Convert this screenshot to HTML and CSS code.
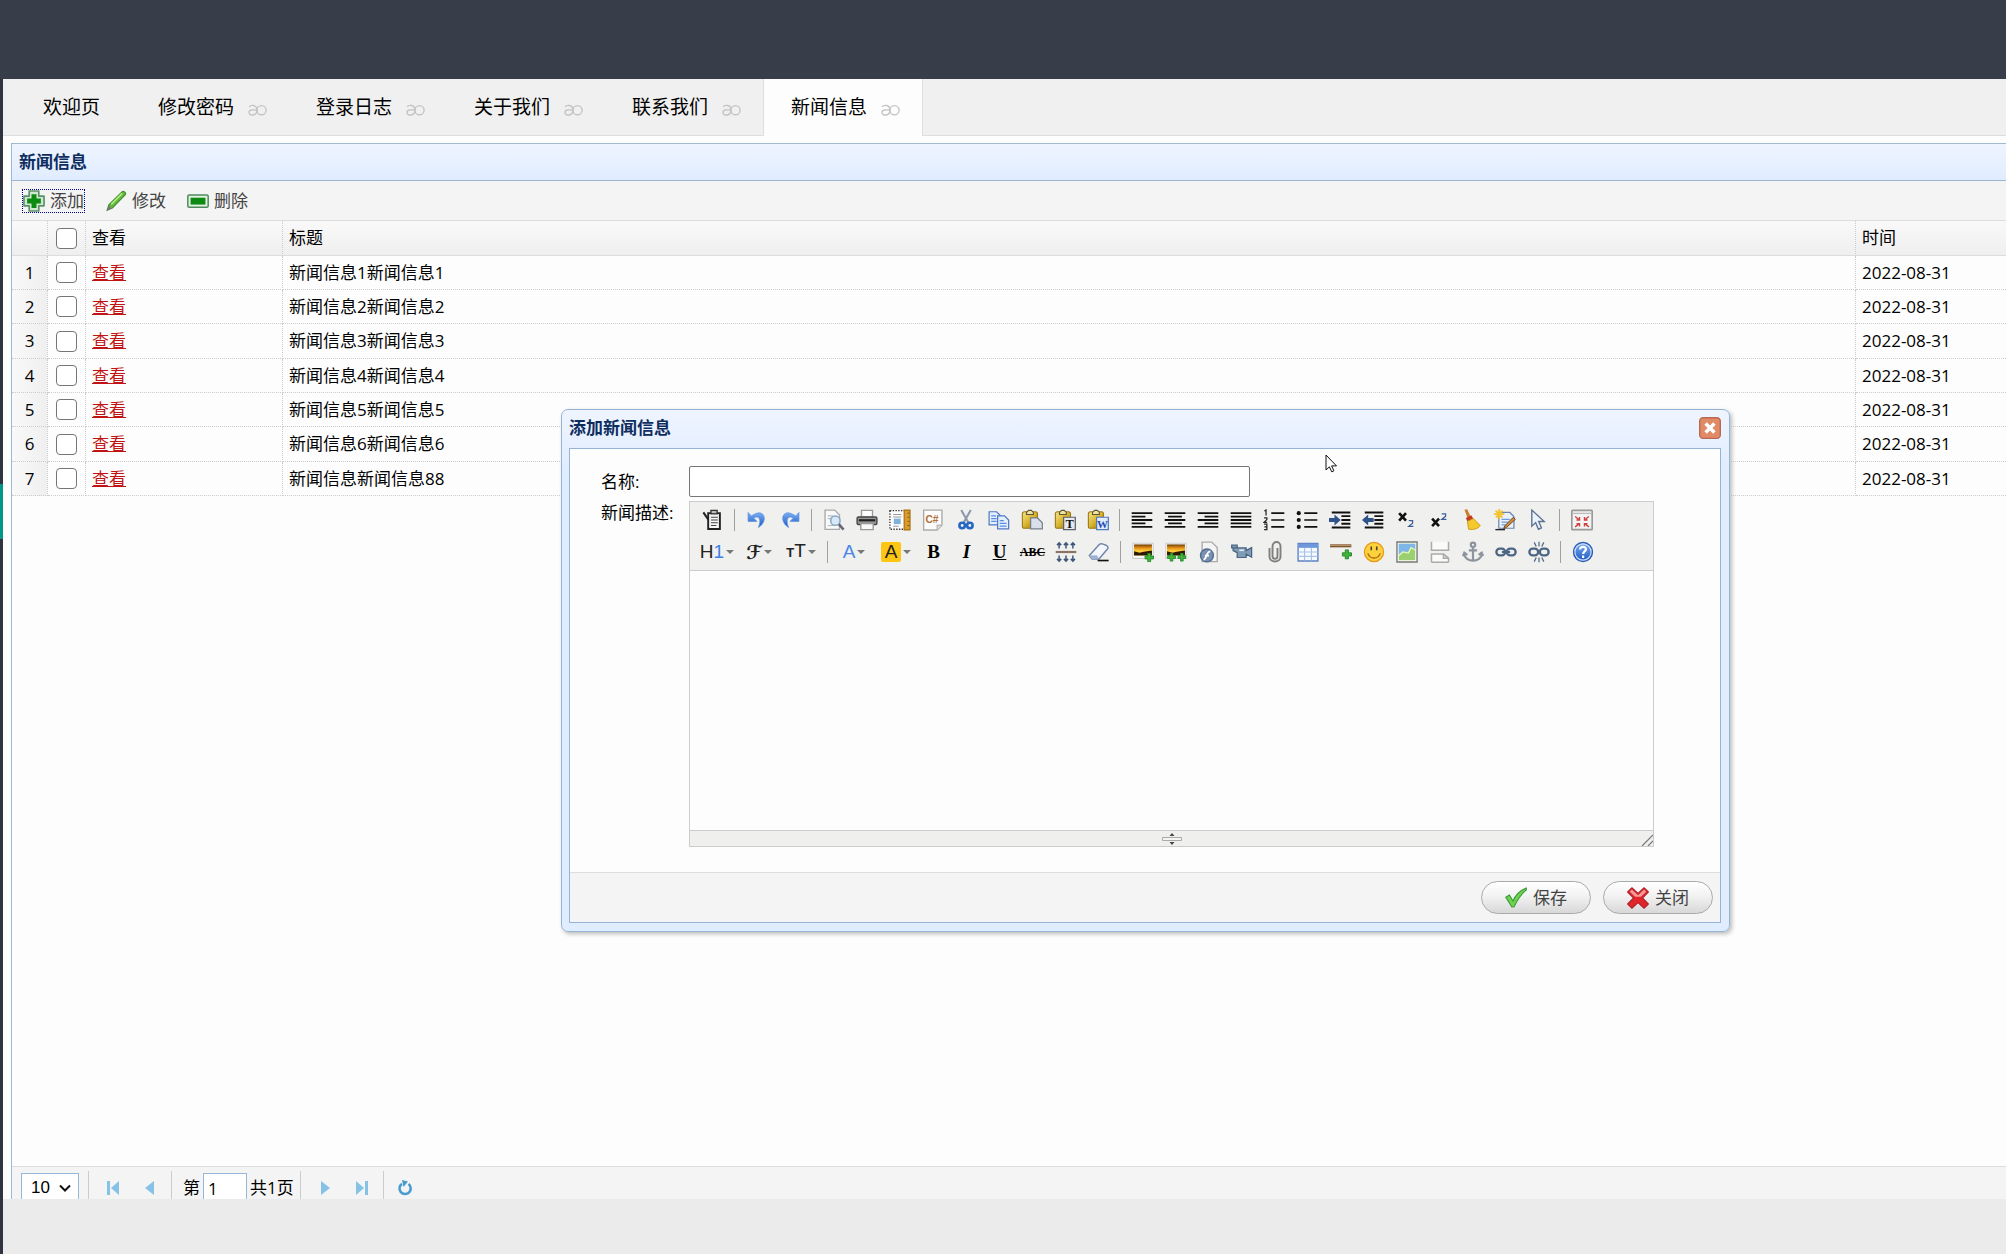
FILE: index.html
```html
<!DOCTYPE html>
<html lang="zh-CN">
<head>
<meta charset="utf-8">
<title>新闻信息</title>
<link rel="stylesheet" href="styles.css">
</head>
<body>
<svg class="defs" aria-hidden="true">
  <defs>
    <symbol id="closer" viewBox="0 0 19 12"><path d="M1.200 3C2.500.6 8.900.4 9 6C9 12.400 1 12.200 1 8.400C1 5.600 4.500 5.700 9 6" fill="none" stroke="currentColor" stroke-width="1.400"/><circle cx="13.500" cy="6.200" r="4.600" fill="none" stroke="currentColor" stroke-width="1.400"/></symbol>
    <symbol id="clipboard" viewBox="0 0 16 16"><path d="M4.500 3h8.500v11.500h-8.500z" fill="#f6f6f6" stroke="#222" stroke-width="1.400"/><path d="M6.500 1h4.500v2.500h-4.500z" fill="#bbb" stroke="#333"/><path d="M6.500 6h5M6.500 8h5M6.500 10h5M6.500 12h4" stroke="#444" stroke-width=".8"/><path d="M1 2.500l3.500 5" stroke="#222" stroke-width="1.500"/></symbol>
    <linearGradient id="gBoard" x2="1" y2="1"><stop offset="0" stop-color="#f7e48a"/><stop offset=".5" stop-color="#d9b52e"/><stop offset="1" stop-color="#8f6d10"/></linearGradient>
    <symbol id="board" viewBox="0 0 16 16"><rect x="1" y="2" width="11" height="12" rx="1.500" fill="url(#gBoard)" stroke="#9a7a1c" stroke-width=".8"/><path d="M4 4V2.500L5.500 1h2L9 2.500V4z" fill="#eee4a0" stroke="#5c5636" stroke-width=".8"/></symbol>
    <linearGradient id="gPic" x2="0" y2="1"><stop offset="0" stop-color="#6b3d08"/><stop offset=".3" stop-color="#e08c12"/><stop offset=".6" stop-color="#ffcf3a"/></linearGradient>
    <symbol id="photo" viewBox="0 0 16 16"><path d="M.6 1.600h14.800v11H.6z" fill="#fff" stroke="#ccc" stroke-width=".8"/><path d="M1.500 2.500h13v8h-13z" fill="url(#gPic)"/><path d="M1.500 7.500l4 1 3-.6 6-1v3.600h-13z" fill="#2c1a05"/></symbol>
    <symbol id="plus" viewBox="0 0 6 6"><path d="M2.100.3h1.800v1.800h1.800v1.800H3.900v1.800H2.100V3.900H.3V2.100h1.800z" fill="#3fb53a" stroke="#1d7f22" stroke-width=".5"/></symbol>
    <symbol id="chain" viewBox="0 0 16 16"><g fill="none" stroke="#4c6785" stroke-width="1.700"><rect x="1" y="5.500" width="6.400" height="5" rx="2.500"/><rect x="8.600" y="5.500" width="6.400" height="5" rx="2.500"/></g></symbol>
    <linearGradient id="gBlue" x2="0" y2="1"><stop offset="0" stop-color="#7bb0f5"/><stop offset="1" stop-color="#1d56c0"/></linearGradient>
    <symbol id="turn" viewBox="0 0 16 16"><path d="M1.500 2.500v6.500h6.500l-2.300-2.300c3-2.400 6 .2 3.300 6.800c6.500-4 5.200-12-1-10.500c-1.700.4-3 1.300-4.100 2z" fill="url(#gBlue)" stroke="#5a8fe0" stroke-width=".5"/></symbol>
  </defs>
</svg>

<header class="topbar"></header>
<div class="shell">
  <aside class="rail"><div class="rail-active"></div></aside>
  <main class="main">
    <nav class="tabs">
      <a class="tab tab-home" href="#">欢迎页</a>
      <a class="tab" href="#">修改密码<svg class="closer"><use href="#closer"/></svg></a>
      <a class="tab" href="#">登录日志<svg class="closer"><use href="#closer"/></svg></a>
      <a class="tab" href="#">关于我们<svg class="closer"><use href="#closer"/></svg></a>
      <a class="tab" href="#">联系我们<svg class="closer"><use href="#closer"/></svg></a>
      <a class="tab tab-active" href="#">新闻信息<svg class="closer"><use href="#closer"/></svg></a>
    </nav>

    <section class="workspace">
      <div class="panel">
        <h2 class="panel-title">新闻信息</h2>
        <div class="toolbar">
          <button class="tool tool-focus" type="button"><svg viewBox="0 0 16 16"><path d="M4.500.7h7v3.800h3.800v7h-3.800v3.800h-7v-3.800H.7v-7h3.800z" fill="#cfe8cf" stroke="#5d8f6a" stroke-width="1.200" stroke-linejoin="round"/><path d="M6.200 3h3.600v3.200H13v3.600H9.800V13H6.200V9.800H3V6.200h3.200z" fill="#0c8a12"/></svg>添加</button>
          <button class="tool" type="button"><svg viewBox="0 0 16 16"><path d="M1.500 14.800l1.300-4L12.500 1.200c1-.9 3.200 1 2.300 2.200L5.300 13.200z" fill="#62b83c" stroke="#3c8f2a" stroke-width=".8"/><path d="M4.500 10.500l8-8" stroke="#b6ea84" stroke-width="1.200"/><path d="M1.300 15l1.300-3.800 2.300 2.200z" fill="#777"/></svg>修改</button>
          <button class="tool" type="button"><svg viewBox="0 0 16 16"><rect x=".6" y="3.600" width="14.800" height="9" rx="1" fill="#e3f2e3" stroke="#4e8a5d" stroke-width="1.100"/><rect x="2.600" y="5.600" width="10.800" height="5" fill="#0c8a12"/></svg>删除</button>
        </div>
        <table class="grid">
          <colgroup><col class="c-num"><col class="c-check"><col class="c-view"><col><col class="c-time"></colgroup>
          <thead><tr><th></th><th class="check"><input type="checkbox" aria-label="全选"></th><th>查看</th><th>标题</th><th>时间</th></tr></thead>
          <tbody>
            <tr><td class="num">1</td><td class="check"><input type="checkbox" aria-label="1"></td><td><a href="#">查看</a></td><td>新闻信息1新闻信息1</td><td>2022-08-31</td></tr>
            <tr><td class="num">2</td><td class="check"><input type="checkbox" aria-label="2"></td><td><a href="#">查看</a></td><td>新闻信息2新闻信息2</td><td>2022-08-31</td></tr>
            <tr><td class="num">3</td><td class="check"><input type="checkbox" aria-label="3"></td><td><a href="#">查看</a></td><td>新闻信息3新闻信息3</td><td>2022-08-31</td></tr>
            <tr><td class="num">4</td><td class="check"><input type="checkbox" aria-label="4"></td><td><a href="#">查看</a></td><td>新闻信息4新闻信息4</td><td>2022-08-31</td></tr>
            <tr><td class="num">5</td><td class="check"><input type="checkbox" aria-label="5"></td><td><a href="#">查看</a></td><td>新闻信息5新闻信息5</td><td>2022-08-31</td></tr>
            <tr><td class="num">6</td><td class="check"><input type="checkbox" aria-label="6"></td><td><a href="#">查看</a></td><td>新闻信息6新闻信息6</td><td>2022-08-31</td></tr>
            <tr><td class="num">7</td><td class="check"><input type="checkbox" aria-label="7"></td><td><a href="#">查看</a></td><td>新闻信息新闻信息88</td><td>2022-08-31</td></tr>
          </tbody>
        </table>
        <div class="pager">
          <div class="pager-row">
            <span class="size"><select aria-label="每页条数"><option>10</option></select><svg viewBox="0 0 12 8"><path d="M1 1.500l5 5 5-5" fill="none" stroke="#111" stroke-width="2"/></svg></span>
            <i class="bar"></i>
            <button class="page" type="button" aria-label="首页"><svg viewBox="0 0 14 14"><path d="M1 0h3v14H1zM13 0v14L5 7z" fill="currentColor"/></svg></button>
            <button class="page" type="button" aria-label="上一页"><svg viewBox="0 0 14 14"><path d="M11 0v14L2 7z" fill="currentColor"/></svg></button>
            <i class="bar"></i>
            <label class="pageno">第<input type="text" value="1">共1页</label>
            <i class="bar"></i>
            <button class="page" type="button" aria-label="下一页"><svg viewBox="0 0 14 14"><path d="M3 0v14l9-7z" fill="currentColor"/></svg></button>
            <button class="page" type="button" aria-label="末页"><svg viewBox="0 0 14 14"><path d="M10 0h3v14h-3zM1 0v14l8-7z" fill="currentColor"/></svg></button>
            <i class="bar"></i>
            <button class="page page-refresh" type="button" aria-label="刷新"><svg viewBox="0 0 16 16"><path d="M5 3.800a5.600 5.600 0 1 0 6.500.2" fill="none" stroke="currentColor" stroke-width="2.600"/><path d="M5 0l6 1.500L6.500 7z" fill="currentColor"/></svg></button>
          </div>
        </div>
      </div>
    </section>
    <footer class="foot"></footer>
  </main>
</div>

<form class="dialog" role="dialog" aria-labelledby="dlg-title">
  <div class="dialog-head">
    <h2 id="dlg-title">添加新闻信息</h2>
    <button class="dialog-x" type="button" aria-label="关闭窗口"><svg viewBox="0 0 16 16"><rect x=".5" y=".5" width="15" height="15" rx="2.500" fill="#e08a66" stroke="#b86a50"/><path d="M4.800 4.800l6.400 6.400M11.200 4.800l-6.400 6.400" stroke="#fff" stroke-width="2.600"/></svg></button>
  </div>
  <div class="dialog-body">
    <div class="fields">
      <label for="name">名称:</label>
      <input class="name" id="name" type="text">
      <label for="desc">新闻描述:</label>
      <div class="editor">
        <div class="ed-tools">
          <div class="ed-row">
            <button type="button" aria-label="模板"><svg viewBox="0 0 16 16"><use href="#clipboard"/></svg></button>
            <i class="ed-sep"></i>
            <button type="button" aria-label="后退"><svg viewBox="0 0 16 16"><use href="#turn"/></svg></button>
            <button type="button" aria-label="前进"><svg viewBox="0 0 16 16"><g transform="matrix(-1 0 0 1 16 0)"><use href="#turn"/></g></svg></button>
            <i class="ed-sep"></i>
            <button type="button" aria-label="预览"><svg viewBox="0 0 16 16"><path d="M1.500.8h7l3.500 3.500v10.500H1.500z" fill="#f7f9fb" stroke="#aaa"/><path d="M3.500 5h4M3.500 7h3M3.500 12h5" stroke="#bbb" stroke-width=".8"/><circle cx="9" cy="8.500" r="3.400" fill="#d5e9fb" stroke="#8aa6c2" stroke-width="1.100"/><path d="M11.500 11l3.500 4" stroke="#667" stroke-width="1.800"/></svg></button>
            <button type="button" aria-label="打印"><svg viewBox="0 0 16 16"><path d="M4 1h8v5H4z" fill="#fff" stroke="#999"/><rect x=".8" y="5.800" width="14.400" height="5.500" rx="1" fill="#999" stroke="#444"/><path d="M2 8.200h12" stroke="#222" stroke-width="1.600"/><path d="M3.500 10.500h9v4.500h-9z" fill="#fafafa" stroke="#999"/></svg></button>
            <button type="button" aria-label="编辑页面"><svg viewBox="0 0 16 16"><path d="M.7 1.200h11v13.500H.7z" fill="#fdfdfd" stroke="#333" stroke-dasharray="1 1"/><path d="M3 4h6M3 5.800h6M3 12.500h4" stroke="#999" stroke-width=".8"/><path d="M3.500 7h5v4h-5z" fill="#7fb2da"/><path d="M11 .8h4.300v14.400H11z" fill="#d99b2b" stroke="#a76e10" stroke-width=".8"/><path d="M13.500 3h1.500M13.500 6h1.500M13.500 9h1.500M13.500 12h1.500" stroke="#7a4d00" stroke-width=".6"/></svg></button>
            <button type="button" aria-label="插入代码"><svg viewBox="0 0 16 16"><path d="M1.200.8h13.300v11l-3.500 3.500H1.200z" fill="#fdfdfd" stroke="#aaa"/><path d="M14.500 11.800H11v3.500" fill="#ddd" stroke="#bbb"/><text x="2.500" y="10.300" font-family="Liberation Sans" font-size="7.500" font-weight="700" fill="#b0703a">C#</text></svg></button>
            <button type="button" aria-label="剪切"><svg viewBox="0 0 16 16"><path d="M4.500.8L9.800 10M11.500.8L6.200 10" stroke="#8b98ab" stroke-width="1.500"/><g fill="none" stroke="#2767c4" stroke-width="1.900"><circle cx="5.200" cy="12" r="2"/><circle cx="10.800" cy="12" r="2"/></g></svg></button>
            <button type="button" aria-label="复制"><svg viewBox="0 0 16 16"><g fill="#e4effd" stroke="#5179c4" stroke-width=".9"><path d="M.8 2h5.400l2.600 2.600v7H.8z"/><path d="M7 5h5l3 3v6.500H7z"/></g><path d="M2.300 5h3.500M2.300 7h4M2.300 9h4M8.500 8.500h3M8.500 10.500h5M8.500 12.500h5" stroke="#5a8fe0" stroke-width=".9"/></svg></button>
            <button type="button" aria-label="粘贴"><svg viewBox="0 0 16 16"><use href="#board"/><path d="M7 6.500h5l3.500 3.500v4.500H7z" fill="#d9e0ea" stroke="#77808c" stroke-width=".9"/></svg></button>
            <button type="button" aria-label="粘贴为无格式文本"><svg viewBox="0 0 16 16"><use href="#board"/><path d="M7 6h8.500v9H7z" fill="#e6e9ee" stroke="#5b626c" stroke-width=".9"/><text x="8.300" y="13.700" font-family="Liberation Serif" font-size="9" font-weight="700" fill="#111">T</text></svg></button>
            <button type="button" aria-label="从 Word 粘贴"><svg viewBox="0 0 16 16"><use href="#board"/><path d="M7 6h8.500v9H7z" fill="#e2ecfa" stroke="#5179c4" stroke-width=".9"/><text x="7.200" y="13.500" font-family="Liberation Serif" font-size="8" font-weight="700" fill="#1d4fae">W</text></svg></button>
            <i class="ed-sep"></i>
            <button type="button" aria-label="左对齐"><svg viewBox="0 0 16 16"><path d="M.5 3h15M.5 5.500h10M.5 8h15M.5 10.500h10M.5 13h15" stroke="#111" stroke-width="1.300"/></svg></button>
            <button type="button" aria-label="居中"><svg viewBox="0 0 16 16"><path d="M.5 3h15M3 5.500h10M.5 8h15M3 10.500h10M.5 13h15" stroke="#111" stroke-width="1.300"/></svg></button>
            <button type="button" aria-label="右对齐"><svg viewBox="0 0 16 16"><path d="M.5 3h15M5.500 5.500h10M.5 8h15M5.500 10.500h10M.5 13h15" stroke="#111" stroke-width="1.300"/></svg></button>
            <button type="button" aria-label="两端对齐"><svg viewBox="0 0 16 16"><path d="M.5 3h15M.5 5.500h15M.5 8h15M.5 10.500h15M.5 13h15" stroke="#111" stroke-width="1.300"/></svg></button>
            <button type="button" aria-label="编号"><svg viewBox="0 0 16 16"><path d="M6 3h9.500M6 8h9.500M6 13h9.500" stroke="#111" stroke-width="1.200"/><path d="M1 1.500l1.200-.7v4M.8 6.500h2v1.200l-2 2h2.200M.8 11h2v4h-2M1 13h1.800" fill="none" stroke="#222" stroke-width=".9"/></svg></button>
            <button type="button" aria-label="项目符号"><svg viewBox="0 0 16 16"><path d="M6 3h9.500M6 8h9.500M6 13h9.500" stroke="#111" stroke-width="1.200"/><g fill="#111"><circle cx="2" cy="3" r="1.500"/><circle cx="2" cy="8" r="1.500"/><circle cx="2" cy="13" r="1.500"/></g></svg></button>
            <button type="button" aria-label="增加缩进"><svg viewBox="0 0 16 16"><path d="M2 2.500h13.500M9 5.200h6.500M9 8h6.500M9 10.700h6.500M2 13.500h13.500" stroke="#111" stroke-width="1.400"/><path d="M0 6.500h4V4l4.500 4L4 12V9.500H0z" fill="#2f5288"/></svg></button>
            <button type="button" aria-label="减少缩进"><svg viewBox="0 0 16 16"><path d="M2 2.500h13.500M9 5.200h6.500M9 8h6.500M9 10.700h6.500M2 13.500h13.500" stroke="#111" stroke-width="1.400"/><path d="M8.500 6.500h-4V4L0 8l4.500 4V9.500h4z" fill="#2f5288"/></svg></button>
            <button type="button" aria-label="下标"><svg viewBox="0 0 16 16"><path d="M3 3l5 5.500M8 3L3 8.500" stroke="#111" stroke-width="1.900"/><path d="M10 8.500h2.800v1.800L10 12.600h3.400" fill="none" stroke="#3d5f96" stroke-width=".9"/></svg></button>
            <button type="button" aria-label="上标"><svg viewBox="0 0 16 16"><path d="M3 7l5 5.500M8 7l-5 5.500" stroke="#111" stroke-width="1.900"/><path d="M10 3.500h2.800v1.800L10 7.600h3.400" fill="none" stroke="#3d5f96" stroke-width=".9"/></svg></button>
            <button type="button" aria-label="一键排版"><svg viewBox="0 0 16 16"><path d="M2.500.5l2-.3L7 5.500 4.800 6.500z" fill="#c9802c"/><path d="M3.500 6.500l4-2 1.500 2.500-4.300 2z" fill="#c43b22"/><path d="M4.700 9L9 7l5 5c-1.500 2.500-5 3.200-8.500 2.700z" fill="#f4c92e" stroke="#cf9a12" stroke-width=".7"/></svg></button>
            <button type="button" aria-label="清理代码"><svg viewBox="0 0 16 16"><path d="M3.500 2.500h8l3 3v8.500H3.500z" fill="#eaf1fb" stroke="#6d86a8" stroke-width=".9"/><path d="M5.500 7.500h6M5.500 9.500h5M5.500 11.500h5" stroke="#6d9be0" stroke-width=".9"/><path d="M3.800 0v7.500M0 3.800h7.500M1.200 1.200l5 5M6.300 1.200l-5 5" stroke="#f2c230" stroke-width="1.300"/><path d="M15.500 7.500l-6.500 6-2 .8.800-2L14 6z" fill="#d58b3e" stroke="#6b4518" stroke-width=".7"/><path d="M1 15h7" stroke="#223"/></svg></button>
            <button type="button" aria-label="全选内容"><svg viewBox="0 0 16 16"><path d="M3.500.8v11.700l2.800-2.600 2 4.800 2.200-1-2-4.600h4z" fill="#edf3fc" stroke="#5b7294"/></svg></button>
            <i class="ed-sep"></i>
            <button type="button" aria-label="全屏"><svg viewBox="0 0 16 16"><rect x=".6" y="1" width="14.800" height="14" rx=".5" fill="#f4f4f4" stroke="#999" stroke-width="1.200"/><path d="M1 3.200h14" stroke="#bbb"/><path d="M3 5.500l2.500 2M13 5.500l-2.500 2M3 13l2.500-2M13 13l-2.500-2M6.200 5.800V8H4M9.800 5.800V8H12M6.200 12.800v-2.200H4M9.800 12.800v-2.200H12" stroke="#cf4040" fill="none"/></svg></button>
          </div>
          <div class="ed-row">
            <button class="drop" type="button"><span>H<b>1</b></span><i class="caret"></i></button>
            <button class="drop" type="button"><span class="script">ℱ</span><i class="caret"></i></button>
            <button class="drop" type="button"><span><small>T</small>T</span><i class="caret"></i></button>
            <i class="ed-sep"></i>
            <button class="drop" type="button"><span class="fore">A</span><i class="caret"></i></button>
            <button class="drop" type="button"><span class="hilite">A</span><i class="caret"></i></button>
            <button class="glyph" type="button"><b>B</b></button>
            <button class="glyph" type="button"><em>I</em></button>
            <button class="glyph" type="button"><u>U</u></button>
            <button class="glyph strike" type="button"><s>ABC</s></button>
            <button type="button" aria-label="行距"><svg viewBox="0 0 16 16"><path d="M.5 8h15" stroke="#8a7464" stroke-width="1.600"/><path d="M3 1v4.500M8 1v4.500M13 1v4.500M3 10.500V15M8 10.500V15M13 10.500V15M1.500 3L3 1.300 4.500 3M6.500 3L8 1.300 9.500 3M11.500 3L13 1.300 14.500 3M1.500 13L3 14.700 4.500 13M6.500 13L8 14.700 9.500 13M11.500 13l1.500 1.700 1.500-1.700" fill="none" stroke="#3f5677" stroke-width="1.100"/></svg></button>
            <button type="button" aria-label="删除格式"><svg viewBox="0 0 16 16"><path d="M1 10.500l7-7.700c.8-.9 2-.9 3-.5l2.500 1c1.300.8 1.300 1.700.5 2.700L8 13H3z" fill="#f3f6fb" stroke="#7188ab" stroke-width="1.100"/><path d="M1 10.500l5.500-.2L8 13H3z" fill="#9eb3d2"/><path d="M7 14.200h8" stroke="#111" stroke-width="1.200"/></svg></button>
            <i class="ed-sep"></i>
            <button type="button" aria-label="图片"><svg viewBox="0 0 16 16"><use href="#photo"/><use href="#plus" x="9" y="8.500" width="7" height="7"/></svg></button>
            <button type="button" aria-label="批量图片上传"><svg viewBox="0 0 16 16"><use href="#photo"/><use href="#plus" x="1.500" y="8.500" width="6.500" height="6.500"/><use href="#plus" x="9" y="8.500" width="6.500" height="6.500"/></svg></button>
            <button type="button" aria-label="Flash"><svg viewBox="0 0 16 16"><path d="M3 .8h7l4 4V15H3z" fill="#f4f4f4" stroke="#aaa"/><circle cx="6.500" cy="10.500" r="4.700" fill="#7992b2" stroke="#4e6b8f"/><path d="M9 7.500c-3-.2-2.500 6-5 6M5 10.700h3" fill="none" stroke="#fff" stroke-width="1.300"/></svg></button>
            <button type="button" aria-label="视音频"><svg viewBox="0 0 16 16"><path d="M.5 3h4v2h-4zM1.500 5h9.500v2l4-2.200v7L11 9.500V12H4.500V8.500L1.500 7z" fill="#7f9bb5" stroke="#486480" stroke-width=".9"/><path d="M6 6.700h3.500" stroke="#dbe8f4" stroke-width="1.300"/></svg></button>
            <button type="button" aria-label="插入文件"><svg viewBox="0 0 16 16"><path d="M4 5v6.500c0 4.500 8 4.500 8 0V4c0-4.300-5.800-4.300-5.800 0v7c0 2.500 3.600 2.500 3.600 0V5" fill="none" stroke="#808080" stroke-width="1.400"/></svg></button>
            <button type="button" aria-label="表格"><svg viewBox="0 0 16 16"><path d="M.8 1.800h14.400v12.700H.8z" fill="#f7fbff" stroke="#5c82c4"/><path d="M1 2h14v3H1z" fill="#6f98dc"/><path d="M1 8h14M1 11.200h14M5.500 5v9M10.500 5v9" stroke="#a9c2e8" stroke-width=".9"/></svg></button>
            <button type="button" aria-label="插入横线"><svg viewBox="0 0 16 16"><path d="M0 3.500h15.500" stroke="#7c5631" stroke-width="2.200"/><path d="M0 3.200h15.500" stroke="#c79c6e" stroke-width=".7"/><use href="#plus" x="8.500" y="6" width="7.500" height="7.500"/></svg></button>
            <button type="button" aria-label="插入表情"><svg viewBox="0 0 16 16"><circle cx="8" cy="8" r="7" fill="#fdd23c" stroke="#e79a1a" stroke-width=".9"/><path d="M3.500 9c1.500 4.500 7.500 4.500 9 0" fill="none" stroke="#a96a10"/><path d="M6 4v2.800M10 4v2.800" stroke="#543" stroke-width="1.200"/></svg></button>
            <button type="button" aria-label="地图"><svg viewBox="0 0 16 16"><path d="M.7.700h14.600v14.600H.7z" fill="#fff" stroke="#777"/><path d="M2 2h12v12H2z" fill="#9bd070"/><path d="M2 2h12v4L10.500 4.500 8.500 8 5 7.500 2 10z" fill="#7fb6ea"/><path d="M2 10.500l3-2.500 4 .8 2-4L14 6.500" fill="none" stroke="#e9f5c0" stroke-width=".9"/></svg></button>
            <button type="button" aria-label="插入分页符"><svg viewBox="0 0 16 16"><path d="M1.800.5v6.200h12.400V.5M1.800 15.500V9.500h8.700l3.700 3v3M10.500 9.500v3h3.700M1.800 15.400h12.400" fill="#fafafa" stroke="#aaa" stroke-width="1.100"/></svg></button>
            <button type="button" aria-label="锚点"><svg viewBox="0 0 16 16"><g fill="none" stroke="#8c949d" stroke-width="1.600"><circle cx="8" cy="2.800" r="1.600"/><path d="M8 4.500v10M5 6.800h6M1.500 9c.5 7 12.500 7 13 0M.7 11l1-2.500 2.200 1.600M15.300 11l-1-2.500-2.200 1.600"/></g></svg></button>
            <button type="button" aria-label="超级链接"><svg viewBox="0 0 16 16"><use href="#chain"/><path d="M5 8h6" stroke="#4c6785" stroke-width="1.600"/></svg></button>
            <button type="button" aria-label="取消超级链接"><svg viewBox="0 0 16 16"><use href="#chain"/><path d="M8 .5v3.500M4.500 1l1.500 3M11.500 1L10 4M8 12v3.500M4.500 15l1.500-3M11.500 15L10 12" stroke="#4c6785" stroke-width=".9"/></svg></button>
            <i class="ed-sep"></i>
            <button type="button" aria-label="关于"><svg viewBox="0 0 16 16"><circle cx="8" cy="8" r="6.900" fill="url(#gBlue)" stroke="#2c5db4"/><circle cx="8" cy="8" r="5.900" fill="none" stroke="#cfe1fb" stroke-width=".8"/><path d="M5.800 6.200c.2-2.800 4.600-2.500 4.300 0-.2 1.300-2 1.500-2 3.200M8.100 10.500v1.800" fill="none" stroke="#fff" stroke-width="1.600"/></svg></button>
          </div>
        </div>
        <textarea id="desc"></textarea>
        <div class="ed-status">
          <svg class="grip" viewBox="0 0 20 12"><path d="M.5 4.500h19v3H.5z" fill="#f4f4f4" stroke="#aaa"/><path d="M10 0l2.500 3h-5zM10 12l2.500-3h-5z" fill="#444"/></svg>
          <svg class="corner" viewBox="0 0 12 12"><path d="M1 12L12 1M7 12l5-5" stroke="#777" stroke-width="1.200"/></svg>
        </div>
      </div>
    </div>
    <div class="dialog-foot">
      <button class="pill" type="button"><svg viewBox="0 0 16 16"><path d="M.6 7.500l2.600-1.700 2.600 4.400C7.500 6 11 2.500 15.400.7L15.600 2C12 5 9 9.500 6.500 14.500H5z" fill="#6fd24e" stroke="#3c9a3c" stroke-width=".8"/></svg>保存</button>
      <button class="pill" type="button"><svg viewBox="0 0 16 16"><path d="M3.500.6L8 4.700 12.500.6l3 3L11.200 8l4.300 4.400-3 3L8 11.300l-4.500 4.100-3-3L4.800 8 .5 3.600z" fill="#e0262b" stroke="#b3222a" stroke-width=".9" stroke-linejoin="round"/><path d="M3.500 1.800L8 6l4.500-4.200 1.500 1.700-4 3.500H6L2 3.500z" fill="#f59a98"/></svg>关闭</button>
    </div>
  </div>
</form>
<svg class="pointer" viewBox="0 0 13 19"><path d="M1 1v15l3.400-3.200 2.300 5 2.200-1-2.300-4.900h4.900z" fill="#fff" stroke="#111"/></svg>
</body>
</html>
```

FILE: styles.css
```css
* { box-sizing: border-box; }

body {
  margin: 0;
  height: 100vh;
  display: flex;
  flex-direction: column;
  overflow: hidden;
  font: 17px/24px "Open Sans", "Noto Sans CJK SC", sans-serif;
  color: #000;
  background: #fdfdfd;
}

button, input, select, textarea { font: inherit; color: inherit; }
button { padding: 0; border: 0; background: none; }
svg { display: block; flex: none; }
h2 { margin: 0; }

.defs { position: absolute; width: 0; height: 0; }

/* Frame */
.topbar { flex: none; height: 79px; background: #373d49; }
.shell { flex: 1; display: flex; min-height: 0; }
.rail { width: 3px; padding-top: 405px; background: #2f3440; }
.rail-active { height: 55px; background: #009688; }
.main { flex: 1; min-width: 0; display: flex; flex-direction: column; }
.foot { height: 55px; background: #ebebeb; }

.tabs {
  display: flex;
  flex: none;
  height: 57px;
  padding-left: 13px;
  background: #f0f0f0;
  border-bottom: 1px solid #dedede;
}
.tab {
  display: flex;
  align-items: center;
  gap: 14px;
  height: 57px;
  width: 158px;
  padding: 0 21px 2px 27px;
  font-size: 19px;
  color: #000;
  text-decoration: none;
  white-space: nowrap;
}
.tab-home { width: 115px; }
.tab-active {
  width: 160px;
  background: #fdfdfd;
  border: solid #dedede;
  border-width: 0 1px;
}
.closer { width: 19px; height: 12px; margin-top: 6px; color: #c4c4c4; }

.workspace { flex: 1; min-height: 0; display: flex; padding: 7px 0 0 8px; }

/* Data panel */
.panel {
  flex: 1;
  display: flex;
  flex-direction: column;
  border: solid #9dbad2;
  border-width: 1px 0 0 1px;
}
.panel-title {
  height: 37px;
  padding: 0 7px;
  font-size: 17px;
  line-height: 36px;
  color: #0e2d5f;
  background: linear-gradient(#eff5ff, #e0ecff);
  border-bottom: 1px solid #9db4cc;
}
.toolbar {
  display: flex;
  align-items: center;
  gap: 19px;
  height: 40px;
  padding: 0 10px;
  background: #f4f4f4;
  border-bottom: 1px solid #ddd;
}
.tool {
  display: flex;
  align-items: center;
  gap: 5px;
  height: 24px;
  border: 1px dotted transparent;
  color: #444;
}
.tool svg { width: 22px; height: 22px; }
.tool-focus { border-color: #00008b; }

.grid { width: 100%; table-layout: fixed; border-collapse: separate; border-spacing: 0; }
.c-num { width: 36px; }
.c-check { width: 38px; }
.c-view { width: 197px; }
.c-time { width: 150px; }
.grid th, .grid td {
  height: 34px;
  padding: 0 6px;
  text-align: left;
  font-weight: 400;
  border: dotted #ccc;
  border-width: 0 1px 1px 0;
}
.grid th { height: 35px; background: linear-gradient(#f9f9f9, #efefef); border-bottom: 1px solid #ddd; }
.grid tr > :last-child { border-right: 0; }
.grid tbody tr:nth-child(3n) td { height: 35px; }
.grid .num { padding: 0; text-align: center; background: linear-gradient(90deg, #f9f9f9, #efefef); }
.grid .check { padding: 0; text-align: center; }
.grid a { color: #c01414; text-decoration: underline; }
.grid input {
  appearance: none;
  display: block;
  width: 21px;
  height: 21px;
  margin: 0 auto;
  background: #fff;
  border: 1px solid #767676;
  border-radius: 4px;
}

.pager {
  height: 33px;
  margin-top: auto;
  overflow: hidden;
  background: #f4f4f4;
  border-top: 1px solid #ddd;
}
.pager-row { display: flex; align-items: center; height: 42px; padding-left: 9px; }
.size {
  display: flex;
  align-items: center;
  width: 58px;
  height: 30px;
  margin-right: 3px;
  padding: 0 7px 0 9px;
  background: #fff;
  border: 1px solid #95b8d8;
}
.size select { appearance: none; flex: 1; min-width: 0; padding: 0; border: 0; background: none; font-family: "Liberation Sans", sans-serif; }
.size svg { width: 12px; height: 8px; }
.bar { width: 1px; height: 34px; margin: 0 9px 0 6px; background: #ccc; }
.page { display: flex; justify-content: center; width: 30px; color: #85c2e6; }
.page + .page { margin-left: 7px; }
.page svg { width: 14px; height: 14px; }
.page-refresh { width: 24px; color: #4a9cd0; }
.page-refresh svg { width: 16px; height: 16px; }
.pageno { display: flex; align-items: center; gap: 3px; padding-left: 2px; }
.pageno input { width: 44px; height: 30px; padding: 0 4px; border: 1px solid #95b8d8; background: #fff; }

/* Floating window */
.dialog {
  position: absolute;
  left: 561px;
  top: 409px;
  width: 1169px;
  padding: 0 8px 8px 7px;
  background: linear-gradient(#eff5ff, #e0ecff 60px);
  border: 1px solid #95b4d4;
  border-radius: 7px;
  box-shadow: 2px 2px 4px #bbb;
}
.dialog-head { display: flex; align-items: center; justify-content: space-between; height: 38px; padding-bottom: 2px; }
.dialog-head h2 { font-size: 17px; line-height: 24px; color: #0e2d5f; }
.dialog-x svg { width: 22px; height: 22px; }
.dialog-body { background: #fdfdfd; border: 1px solid #95b4d4; }

.fields {
  display: grid;
  grid-template-columns: 88px 1fr;
  justify-items: start;
  row-gap: 4px;
  padding: 17px 66px 25px 31px;
}
.fields label { align-self: start; }
.fields label:first-child { padding-top: 4px; }
.name { width: 561px; height: 31px; padding: 0 4px; border: 1px solid #767676; border-radius: 2px; background: #fff; }

.editor { width: 100%; border: 1px solid #ccc; }
.ed-tools {
  padding: 2px 6px;
  background: #f0f0ee;
  border-bottom: 1px solid #ccc;
}
.ed-row { display: flex; align-items: center; height: 32px; }
.ed-row button { display: flex; align-items: center; justify-content: center; width: 33px; height: 30px; }
.ed-row button svg { width: 22px; height: 22px; }
.ed-sep { width: 1px; height: 22px; margin: 0 5px; background: #a0a0a0; }
.ed-row .drop { width: 42px; gap: 2px; font: 19px/24px "Liberation Sans", sans-serif; color: #222; }
.drop b { font-weight: 400; color: #3b82e8; }
.drop small { font-size: 13px; font-weight: 700; }
.drop .fore { color: #4a86e8; }
.drop .hilite { width: 20px; height: 20px; line-height: 20px; background: #fdc613; border-radius: 2px; }
.drop .script { font-family: "DejaVu Sans", sans-serif; font-weight: 700; }
.caret { border: solid transparent; border-width: 4px 4px 0; border-top-color: #777; }
.ed-row .glyph { font: 700 19px/22px "Liberation Serif", serif; color: #000; }
.ed-row .strike { font-size: 12px; }
.editor textarea { display: block; width: 100%; height: 259px; padding: 4px; border: 0; outline: 0; resize: none; background: #fdfdfd; }
.ed-status {
  display: grid;
  grid-template-columns: 1fr auto 1fr;
  align-items: center;
  height: 16px;
  background: #efefed;
  border-top: 1px solid #ccc;
}
.grip { grid-column: 2; width: 20px; height: 12px; }
.corner { justify-self: end; align-self: end; width: 12px; height: 12px; }

.dialog-foot {
  display: flex;
  justify-content: flex-end;
  gap: 12px;
  padding: 8px 7px;
  background: #f4f4f4;
  border-top: 1px solid #ddd;
}
.pill {
  display: flex;
  align-items: center;
  justify-content: center;
  gap: 6px;
  width: 110px;
  height: 33px;
  color: #444;
  background: linear-gradient(#fff, #f2f2f2 45%, #d8d8d8);
  border: 1px solid #aaa;
  border-radius: 17px;
}
.pill svg { width: 22px; height: 22px; }

.pointer { position: absolute; left: 1325px; top: 454px; width: 13px; height: 19px; }
```
